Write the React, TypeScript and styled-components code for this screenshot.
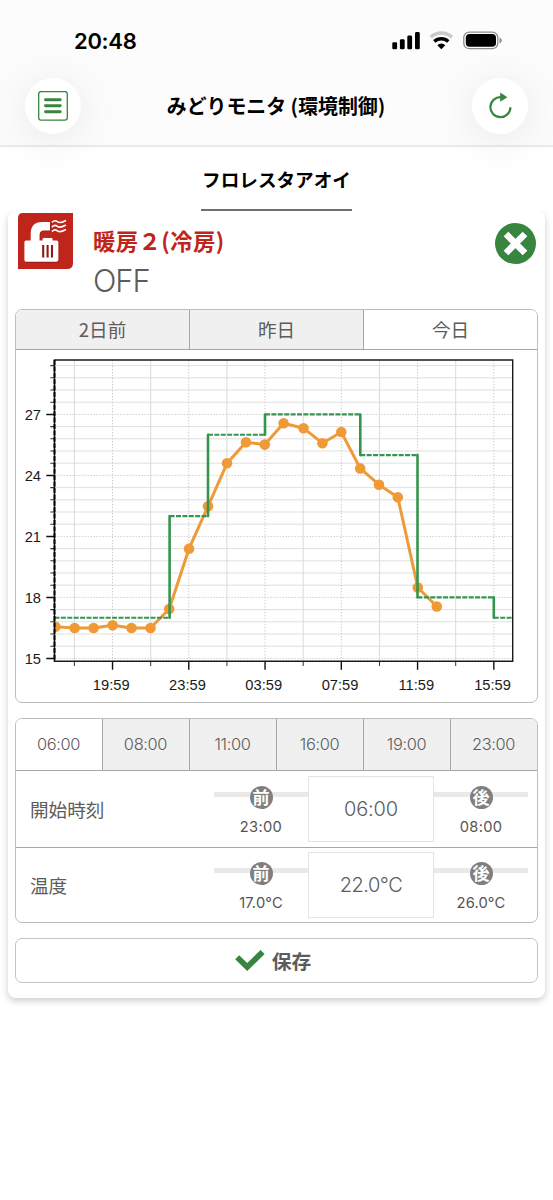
import React from "react";
import styled, { createGlobalStyle } from "styled-components";

const GREEN = "#37853f";
const RED = "#c0251b";
const TEXT = "#5c5c5c";

const GlobalStyle = createGlobalStyle`
  *, *::before, *::after { box-sizing: border-box; }
  html, body { margin: 0; background: #fff; }
  body {
    font-family: "Inter", "Noto Sans CJK JP", sans-serif;
    color: ${TEXT};
    overflow: hidden;
  }
  button { font-family: inherit; color: inherit; padding: 0; margin: 0; cursor: pointer; }
`;

const Screen = styled.div`
  width: 553px;
  height: 1200px;
  display: flex;
  flex-direction: column;
  background: #fff;
`;

const Header = styled.header`
  height: 147px;
  flex: none;
  background: #fcfcfc;
  border-bottom: 2px solid #e9e9e9;
  display: flex;
  flex-direction: column;
`;

const StatusBar = styled.div`
  height: 77px;
  padding: 5px 51px 0 74px;
  display: flex;
  align-items: center;
  justify-content: space-between;
`;

const Clock = styled.span`
  font-size: 22px;
  font-weight: 600;
  line-height: 28px;
  color: #000;
  letter-spacing: -0.3px;
`;

const StatusIcons = styled.svg`
  display: block;
  width: 111px;
  height: 20px;
`;

const NavBar = styled.nav`
  display: flex;
  align-items: center;
  justify-content: space-between;
  height: 57px;
  padding: 0 25px;
`;

const RoundButton = styled.button`
  width: 56px;
  height: 56px;
  border: 0;
  border-radius: 50%;
  background: #fff;
  box-shadow: 0 6px 44px rgba(0, 0, 0, 0.085);
  display: grid;
  place-items: center;
`;

const AppTitle = styled.h1`
  margin: 0;
  padding-right: 1px;
  font-family: "Noto Sans CJK JP", sans-serif;
  font-size: 19.9px;
  font-weight: 600;
  line-height: 28px;
  color: #000;
  white-space: nowrap;
`;

const SiteTabs = styled.div`
  height: 64px;
  flex: none;
  display: flex;
  justify-content: center;
`;

const SiteTab = styled.div`
  width: 151px;
  border-bottom: 2px solid #707070;
  font-family: "Noto Sans CJK JP", sans-serif;
  font-size: 18.6px;
  font-weight: 600;
  line-height: 64px;
  color: #000;
  text-align: center;
  white-space: nowrap;
`;

const Card = styled.main`
  margin: 0 8px;
  height: 787px;
  padding: 2px 7px 0;
  border-radius: 8px;
  background: #fff;
  box-shadow: 0 3px 7px rgba(0, 0, 0, 0.2);
  clip-path: inset(0 -20px -30px -20px);
  display: flex;
  flex-direction: column;
`;

const DeviceHead = styled.div`
  height: 96px;
  flex: none;
  display: flex;
  align-items: flex-start;
  padding: 0 2px 0 3px;
`;

const DeviceText = styled.div`
  flex: 1;
  padding: 11px 0 0 20px;
`;

const DeviceName = styled.h2`
  margin: 0;
  font-family: "Noto Sans CJK JP", sans-serif;
  font-size: 22.4px;
  font-weight: 700;
  line-height: 32px;
  letter-spacing: 0.4px;
  color: ${RED};
`;

const DeviceState = styled.div`
  font-size: 30.8px;
  font-weight: 350;
  line-height: 36px;
  margin-top: 7px;
  letter-spacing: -1px;
`;

const CloseButton = styled.button`
  margin-top: 10px;
  width: 41px;
  height: 41px;
  border: 0;
  border-radius: 50%;
  background: ${GREEN};
  display: grid;
  place-items: center;
`;

const Panel = styled.section`
  flex: none;
  border: 1px solid #bdbdbd;
  border-radius: 7px;
  overflow: hidden;
  background: #fff;
  margin-bottom: 15px;
`;

const Tabs = styled.div<{ $height: number }>`
  display: flex;
  height: ${(p) => p.$height}px;
  border-bottom: 1px solid #a6a6a6;
`;

const DayTab = styled.button<{ $active?: boolean }>`
  flex: 1;
  border: 0;
  border-right: 1px solid #a6a6a6;
  padding-bottom: 2px;
  background: ${(p) => (p.$active ? "#fff" : "#f0f0f0")};
  font-family: "Noto Sans CJK JP", sans-serif;
  font-size: 18.6px;
  &:last-child { border-right: 0; }
`;

const SlotTab = styled(DayTab)`
  padding: 0 1px 1px 0;
  font-family: "Inter", sans-serif;
  font-size: 16.4px;
  font-weight: 300;
  letter-spacing: -0.35px;
`;

const ChartSvg = styled.svg`
  display: block;
  width: 521px;
  height: 352px;
`;

const SettingRow = styled.div`
  display: flex;
  align-items: center;
  height: 76px;
  padding: 0 9px 0 14px;
  & + & { border-top: 1px solid #a6a6a6; height: 75px; }
`;

const SettingLabel = styled.div`
  flex: 1;
  padding-bottom: 1px;
  font-family: "Noto Sans CJK JP", sans-serif;
  font-size: 18.6px;
  line-height: 26px;
`;

const StepButton = styled.button`
  position: relative;
  width: 94px;
  height: 66px;
  border: 0;
  background: none;
  display: flex;
  flex-direction: column;
  align-items: center;
  padding-top: 10px;
  &::before {
    content: "";
    position: absolute;
    left: 0;
    right: 0;
    top: 16px;
    height: 5px;
    background: #e9e9e9;
  }
`;

const StepMark = styled.span`
  position: relative;
  width: 23px;
  height: 23px;
  border-radius: 50%;
  background: #7f7f7f;
  color: #fff;
  font-family: "Noto Sans CJK JP", sans-serif;
  font-size: 17px;
  font-weight: 700;
  line-height: 21px;
  display: flex;
  justify-content: center;
`;

const StepValue = styled.span<{ $spacing: number }>`
  font-size: 14.7px;
  line-height: 18px;
  margin-top: 9px;
  color: #555;
  letter-spacing: ${(p) => p.$spacing}px;
`;

const ValueBox = styled.div<{ $spacing: number }>`
  width: 126px;
  height: 66px;
  border: 1px solid #e4e4e4;
  background: #fff;
  display: grid;
  place-items: center;
  font-size: 20px;
  font-weight: 300;
  letter-spacing: ${(p) => p.$spacing}px;
`;

const SaveButton = styled.button`
  flex: none;
  height: 45px;
  padding-right: 7px;
  padding-bottom: 1px;
  border: 1px solid #c4c4c4;
  border-radius: 7px;
  background: #fff;
  display: flex;
  align-items: center;
  justify-content: center;
  gap: 7px;
  font-family: "Noto Sans CJK JP", sans-serif;
  font-size: 19.8px;
  font-weight: 600;
`;

const MenuIcon = () => (
  <svg width="30" height="30" viewBox="0 0 30 30" fill="none" stroke={GREEN}>
    <rect x="0.7" y="0.5" width="28.6" height="28.6" rx="2.4" strokeWidth="1.3" />
    <path d="M7.3 9H22M7.3 15H22M7.3 21H22" transform="translate(.2 -.2)" strokeWidth="2.9" strokeLinecap="round" />
  </svg>
);

const RefreshIcon = () => (
  <svg width="30" height="30" viewBox="0 0 30 30" fill="none">
    <path d="M25.4 16.2A10 10 0 1 1 16.2 6.2" stroke={GREEN} strokeWidth="2.2" />
    <path d="M15.2 1.6L22.4 6.2L15.2 10.8Z" fill={GREEN} />
  </svg>
);

const HeaterIcon = () => (
  <svg width="55" height="56" viewBox="0 0 55 56">
    <path d="M5 0H55V50Q55 56 49 56H0V5Q0 0 5 0Z" fill={RED} />
    <g transform="translate(.8 .9)" fill="#7d120c" opacity=".6">
      <path d="M12.7 28V21Q12.7 9 24 9H32V17.4H26Q21.6 17.4 21.6 22V28Z" />
      <path d="M8 27.4H24.6V26Q24.6 25 25.6 25H33.6Q34.6 25 34.6 26V27.4H38.6Q40.4 27.4 40.4 29V47Q40.4 48.8 38.6 48.8H8Q6.4 48.8 6.4 47V29Q6.4 27.4 8 27.4Z" />
    </g>
    <g fill="#fff">
      <path d="M12.7 28V21Q12.7 9 24 9H32V17.4H26Q21.6 17.4 21.6 22V28Z" />
      <path d="M8 27.4H24.6V26Q24.6 25 25.6 25H33.6Q34.6 25 34.6 26V27.4H38.6Q40.4 27.4 40.4 29V47Q40.4 48.8 38.6 48.8H8Q6.4 48.8 6.4 47V29Q6.4 27.4 8 27.4Z" />
    </g>
    <path d="M25.2 32V44.4M29.6 32V44.4M34 32V44.4" stroke="#8f1a14" strokeWidth="2.1" />
    <g fill="none" stroke="#fff" strokeWidth="1.6" strokeLinecap="round">
      {[9, 13.6, 18.1].map((y) => (
        <path key={y} d={`M34.4 ${y}c2-2 3.6-1.4 5 -.3s3.6 1.4 8-1`} />
      ))}
    </g>
  </svg>
);

const StatusGlyphs = () => (
  <StatusIcons viewBox="0 0 111 20">
    <rect x="1.3" y="11.2" width="4.8" height="7.1" rx="1.4" />
    <rect x="8.9" y="8.2" width="4.8" height="10.1" rx="1.4" />
    <rect x="16.3" y="4.6" width="4.8" height="13.7" rx="1.4" />
    <rect x="24" y="1" width="4.8" height="17.3" rx="1.4" />
    <g transform="translate(50.3 0)" fill="none" strokeWidth="3.4">
      <path d="M-10.6 6.2A15.6 15.6 0 0 1 10.6 6.2" stroke="#c9c9c9" />
      <path d="M-7 10.5A10.2 10.2 0 0 1 7 10.5" stroke="#000" />
      <path d="M0 18.2L-4 14.2A5.8 5.8 0 0 1 4 14.2Z" fill="#000" />
    </g>
    <rect x="72.8" y="1.1" width="34" height="16.6" rx="5.4" fill="none" stroke="#8d8d8d" strokeWidth="1.3" />
    <rect x="74.8" y="3" width="30.2" height="12.8" rx="3.8" />
    <path d="M108.5 6.4Q110.8 7.2 110.8 9.4T108.5 12.4Z" fill="#8d8d8d" />
  </StatusIcons>
);

/* Plot area, in the coordinates of the chart drawing */
const LEFT = 38.5;
const RIGHT = 496.7;
const TOP = 10;
const BOTTOM = 311.2;
const STEP = 38.13;
const FIRST = 58.4;

const yOf = (v: number) => 308.4 - (v - 15) * 20.33;

const minorY = Array.from({ length: 25 }, (_, i) => i);
const columns = Array.from({ length: 12 }, (_, i) => i);
const timeLabels = ["19:59", "23:59", "03:59", "07:59", "11:59", "15:59"];

const measured: [number, number][] = [
  [39.4, 276.7], [58.6, 278], [77.6, 278], [96.6, 275.3], [115.5, 278], [134.5, 278],
  [153.2, 259], [173, 198.7], [192, 156.3], [211, 113.3], [230, 92.2], [248.8, 94.6],
  [267.6, 73.2], [287.5, 78.2], [306.4, 93.2], [325.3, 82], [344.2, 118.4],
  [363, 134.7], [381.8, 147.2], [401.8, 237.5], [420.8, 256.5],
];

const setpoints: [number, number, number][] = [
  [38.5, 153.6, 17],
  [153.6, 192, 22],
  [192, 249, 26],
  [249, 344.3, 27],
  [344.3, 401.5, 25],
  [401.5, 477.8, 18],
  [477.8, 495.8, 17],
];

const TemperatureChart = () => (
  <ChartSvg viewBox="0 0 521 352">
    <defs>
      <clipPath id="plot">
        <rect x={LEFT} y={TOP} width={RIGHT - LEFT} height={BOTTOM - TOP} />
      </clipPath>
    </defs>

    {minorY.map((i) => {
      const y = 308.4 - i * 12.2;
      const major = i % 5 === 0;
      return (
        <g key={i}>
          <line
            x1={LEFT} x2={RIGHT} y1={y} y2={y}
            stroke={major ? "#c8c8c8" : "#dfdfdf"}
            strokeDasharray={major ? "1.3 1.7" : undefined}
          />
          <line x1={major ? 30.3 : 34.3} x2={LEFT} y1={y} y2={y} stroke={major ? "#111" : "#333"} strokeWidth={major ? 1.5 : 1.1} />
        </g>
      );
    })}
    {columns.map((i) => {
      const x = FIRST + i * STEP;
      const major = i % 2 === 1;
      return (
        <g key={i}>
          <line
            x1={x} x2={x} y1={TOP} y2={BOTTOM}
            stroke={major ? "#c8c8c8" : "#dadada"}
            strokeDasharray={major ? "1.3 1.7" : undefined}
          />
          <line x1={x} x2={x} y1={BOTTOM} y2={major ? 319.8 : 316} stroke={major ? "#111" : "#333"} strokeWidth={major ? 1.4 : 1} />
        </g>
      );
    })}

    <g clipPath="url(#plot)">
      <polyline points={measured.map((p) => p.join(",")).join(" ")} fill="none" stroke="#ef9a36" strokeWidth="3" strokeLinejoin="round" />
      {measured.map(([x, y]) => (
        <circle key={x} cx={x} cy={y} r="5.3" fill="#ef9a36" />
      ))}
      {setpoints.map(([x1, x2, v], i) => (
        <g key={x1} stroke="#35954f">
          <line x1={x1} x2={x2} y1={yOf(v)} y2={yOf(v)} strokeWidth="2.2" strokeDasharray="5 1.4" />
          {i > 0 && <line x1={x1} x2={x1} y1={yOf(setpoints[i - 1][2])} y2={yOf(v)} strokeWidth="2.6" strokeLinecap="round" />}
        </g>
      ))}
    </g>

    <g fill="none" stroke="#1a1a1a">
      <path d={`M${LEFT} ${TOP}H${RIGHT}V${BOTTOM}H${LEFT}Z`} strokeWidth="1.4" />
      <path d={`M${LEFT} ${TOP}V${BOTTOM}`} strokeWidth="2" strokeDasharray="5 1.4" stroke="#000" />
    </g>

    <g fontFamily="'Liberation Sans', sans-serif" fontSize="14.7" fill="#1a1a1a">
      {[15, 18, 21, 24, 27].map((v) => (
        <text key={v} x="25" y={yOf(v) + 5.8} textAnchor="end">{v}</text>
      ))}
      {timeLabels.map((t, i) => (
        <text key={t} x={FIRST + (i * 2 + 1) * STEP - 1.3} y="340.2" textAnchor="middle">{t}</text>
      ))}
    </g>
  </ChartSvg>
);

interface SettingProps {
  label: string;
  prev: string;
  value: string;
  next: string;
  stepSpacing: number;
  valueSpacing: number;
}

const Setting = ({ label, prev, value, next, stepSpacing, valueSpacing }: SettingProps) => (
  <SettingRow>
    <SettingLabel>{label}</SettingLabel>
    <StepButton>
      <StepMark>前</StepMark>
      <StepValue $spacing={stepSpacing}>{prev}</StepValue>
    </StepButton>
    <ValueBox $spacing={valueSpacing}>{value}</ValueBox>
    <StepButton>
      <StepMark>後</StepMark>
      <StepValue $spacing={stepSpacing}>{next}</StepValue>
    </StepButton>
  </SettingRow>
);

const days = ["2日前", "昨日", "今日"];
const slots = ["06:00", "08:00", "11:00", "16:00", "19:00", "23:00"];

export default function App() {
  return (
    <Screen>
      <GlobalStyle />
      <Header>
        <StatusBar>
          <Clock>20:48</Clock>
          <StatusGlyphs />
        </StatusBar>
        <NavBar>
          <RoundButton aria-label="menu"><MenuIcon /></RoundButton>
          <AppTitle>みどりモニタ (環境制御)</AppTitle>
          <RoundButton aria-label="refresh"><RefreshIcon /></RoundButton>
        </NavBar>
      </Header>

      <SiteTabs>
        <SiteTab>フロレスタアオイ</SiteTab>
      </SiteTabs>

      <Card>
        <DeviceHead>
          <HeaterIcon />
          <DeviceText>
            <DeviceName>暖房２(冷房)</DeviceName>
            <DeviceState>OFF</DeviceState>
          </DeviceText>
          <CloseButton aria-label="close">
            <svg width="25" height="25" viewBox="0 0 25 25">
              <path d="M3 3L22 22M22 3L3 22" stroke="#fff" strokeWidth="6.6" />
            </svg>
          </CloseButton>
        </DeviceHead>

        <Panel>
          <Tabs $height={40}>
            {days.map((d, i) => (
              <DayTab key={d} $active={i === 2}>{d}</DayTab>
            ))}
          </Tabs>
          <TemperatureChart />
        </Panel>

        <Panel>
          <Tabs $height={52}>
            {slots.map((s, i) => (
              <SlotTab key={s} $active={i === 0}>{s}</SlotTab>
            ))}
          </Tabs>
          <Setting label="開始時刻" prev="23:00" value="06:00" next="08:00" stepSpacing={0.3} valueSpacing={-0.1} />
          <Setting label="温度" prev="17.0°C" value="22.0°C" next="26.0°C" stepSpacing={0.15} valueSpacing={-0.5} />
        </Panel>

        <SaveButton>
          <svg width="30" height="22" viewBox="0 0 30 22">
            <path d="M2.2 8.2L12.2 18L27.6 3" fill="none" stroke={GREEN} strokeWidth="5.8" />
          </svg>
          保存
        </SaveButton>
      </Card>
    </Screen>
  );
}
